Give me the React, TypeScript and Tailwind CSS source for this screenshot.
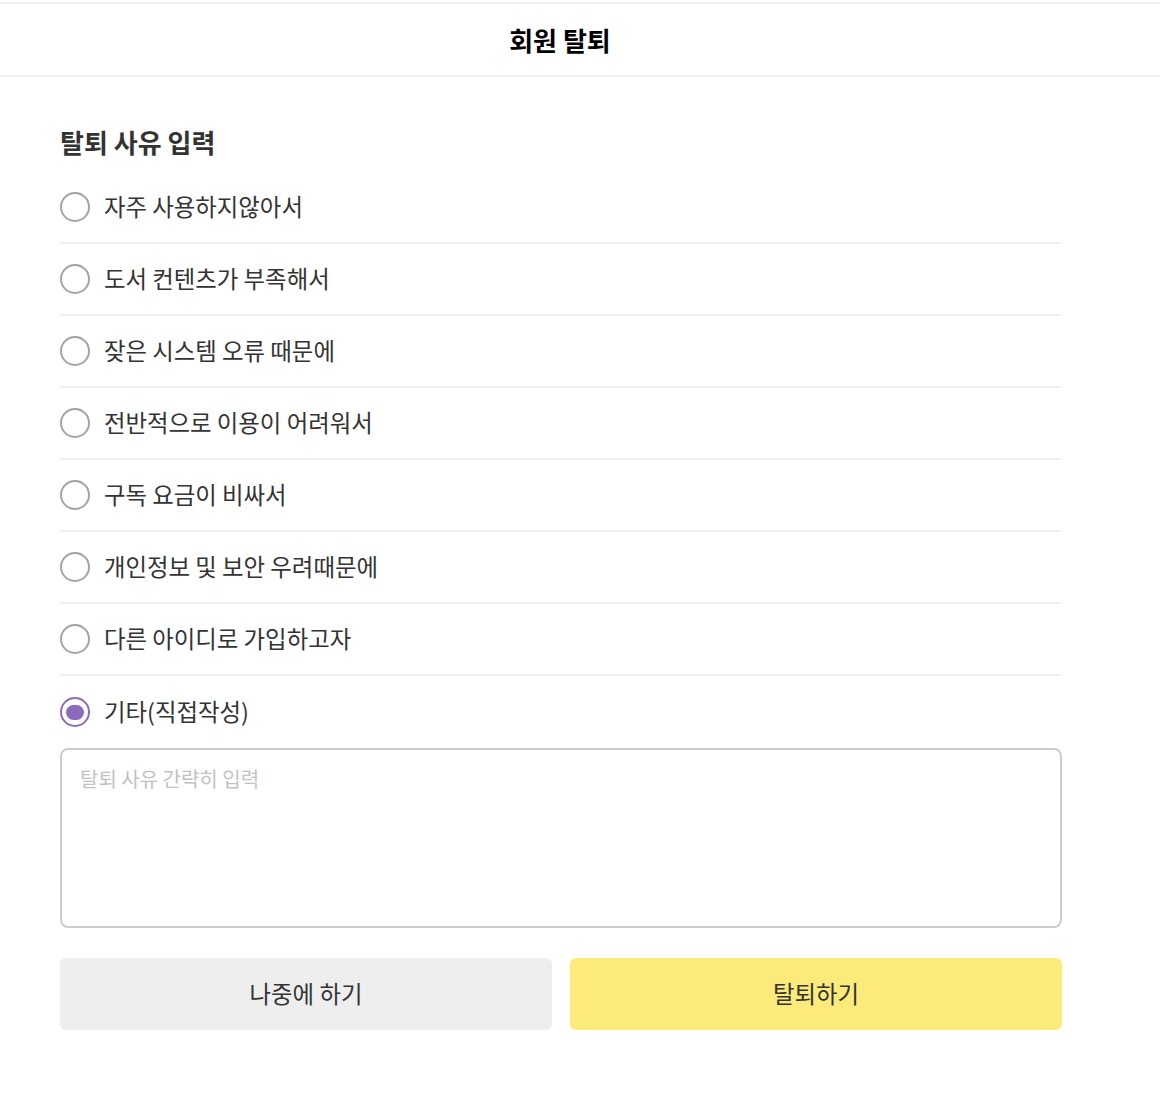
import React, { useState } from 'react';

const REASONS = [
  '자주 사용하지않아서',
  '도서 컨텐츠가 부족해서',
  '잦은 시스템 오류 때문에',
  '전반적으로 이용이 어려워서',
  '구독 요금이 비싸서',
  '개인정보 및 보안 우려때문에',
  '다른 아이디로 가입하고자',
  '기타(직접작성)',
];

const Radio = ({ checked }: { checked: boolean }) => (
  <span
    className={
      checked
        ? 'flex h-[30px] w-[30px] shrink-0 items-center justify-center rounded-full border-2 border-[#8c6bbd]'
        : 'flex h-[30px] w-[30px] shrink-0 items-center justify-center rounded-full border-2 border-[#a3a3a3]'
    }
  >
    {checked && <span className="h-[15px] w-[18px] rounded-full bg-[#8c6bbd]" />}
  </span>
);

export default function App() {
  const [selected, setSelected] = useState(REASONS.length - 1);
  const [memo, setMemo] = useState('');

  return (
    <div
      className="min-h-[1104px] bg-white text-[#333]"
      style={{ fontFamily: '"Noto Sans CJK KR", "Noto Sans", sans-serif' }}
    >
      <header className="mt-[2px] flex h-[75px] items-center justify-center border-y-2 border-[#efefef] pr-[40px]">
        <h1 className="text-[26px] font-bold text-black">회원 탈퇴</h1>
      </header>

      <main className="w-[1002px] ml-[60px] pt-[47px]">
        <h2 className="mb-[12px] text-[26px] font-bold leading-[36px]">탈퇴 사유 입력</h2>

        <ul>
          {REASONS.map((reason, i) => (
            <li
              key={reason}
              onClick={() => setSelected(i)}
              className={
                i === REASONS.length - 1
                  ? 'flex h-[72px] cursor-pointer items-center gap-[14px]'
                  : 'flex h-[72px] cursor-pointer items-center gap-[14px] border-b-2 border-[#efefef]'
              }
            >
              <Radio checked={selected === i} />
              <span className="text-[23.4px] leading-none">{reason}</span>
            </li>
          ))}
        </ul>

        <textarea
          value={memo}
          onChange={e => setMemo(e.target.value)}
          placeholder="탈퇴 사유 간략히 입력"
          className="block h-[180px] w-full resize-none rounded-[8px] border-2 border-[#cccccc] px-[18px] py-[14px] text-[20px] outline-none placeholder:text-[#c2c2c2]"
        />

        <div className="mt-[30px] flex gap-[18px]">
          <button className="h-[72px] flex-1 rounded-[6px] bg-[#eeeeee] text-[23.4px] text-[#333]">나중에 하기</button>
          <button className="h-[72px] flex-1 rounded-[6px] bg-[#fceb7a] text-[23.4px] text-[#333]">탈퇴하기</button>
        </div>
      </main>
    </div>
  );
}
